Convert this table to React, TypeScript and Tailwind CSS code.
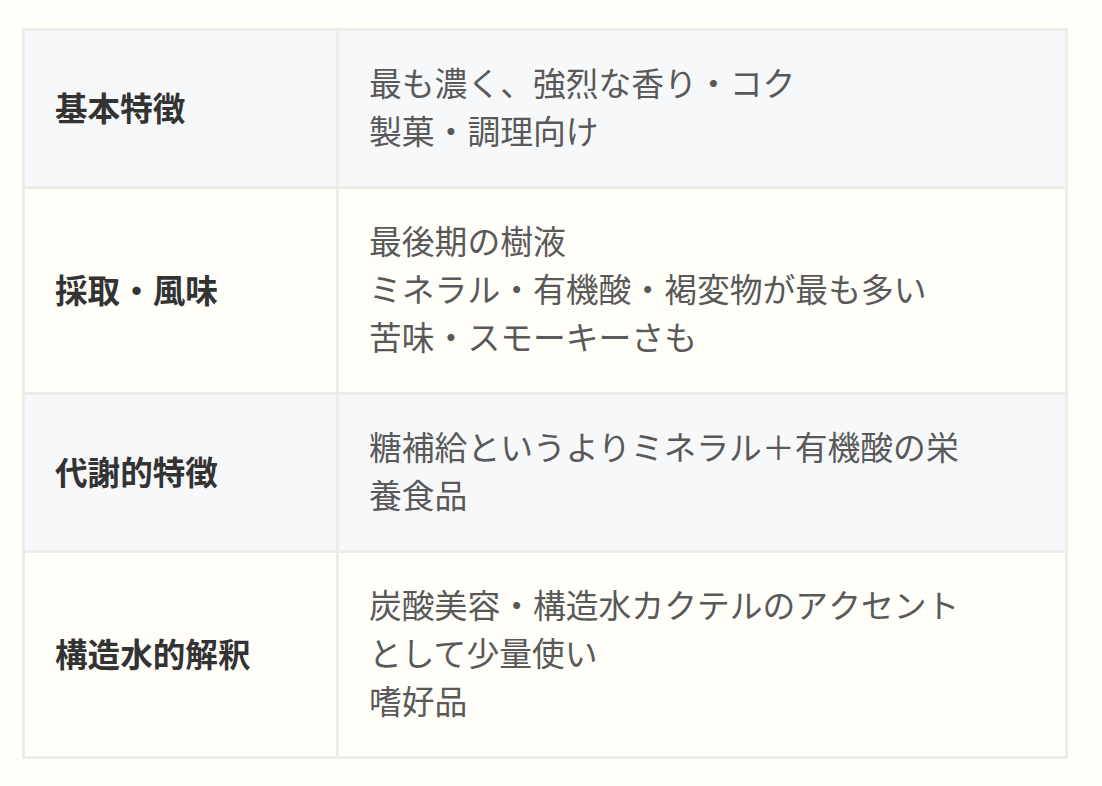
import React from 'react';

type Row = { label: string; lines: string[]; shaded: boolean };

const ROWS: Row[] = [
  { label: '基本特徴', lines: ['最も濃く、強烈な香り・コク', '製菓・調理向け'], shaded: true },
  {
    label: '採取・風味',
    lines: ['最後期の樹液', 'ミネラル・有機酸・褐変物が最も多い', '苦味・スモーキーさも'],
    shaded: false,
  },
  { label: '代謝的特徴', lines: ['糖補給というよりミネラル＋有機酸の栄', '養食品'], shaded: true },
  {
    label: '構造水的解釈',
    lines: ['炭酸美容・構造水カクテルのアクセント', 'として少量使い', '嗜好品'],
    shaded: false,
  },
];

export default function App() {
  return (
    <div
      className="min-h-[786px] w-full bg-[#fffef9] pl-[22px] pt-[28px]"
      style={{ fontFamily: '"Noto Sans CJK JP", "Noto Sans", sans-serif' }}
    >
      <table className="w-[1046px] table-fixed border-collapse border-[3px] border-[#ececea]">
        <colgroup>
          <col className="w-[314px]" />
          <col />
        </colgroup>
        <tbody>
          {ROWS.map(row => (
            <tr key={row.label} className={row.shaded ? 'bg-[#f7f8fa]' : 'bg-[#fffef9]'}>
              <td className="border-[3px] border-[#ececea] px-[30px] pt-[28px] pb-[31px] align-middle text-[32.6px] font-bold leading-[48px] text-[#333333]">
                {row.label}
              </td>
              <td className="border-[3px] border-[#ececea] px-[30px] pt-[27px] pb-[32px] align-middle text-[32.8px] leading-[48px] text-[#595959]">
                {row.lines.map(line => (
                  <div key={line} className="whitespace-nowrap">{line}</div>
                ))}
              </td>
            </tr>
          ))}
        </tbody>
      </table>
    </div>
  );
}
